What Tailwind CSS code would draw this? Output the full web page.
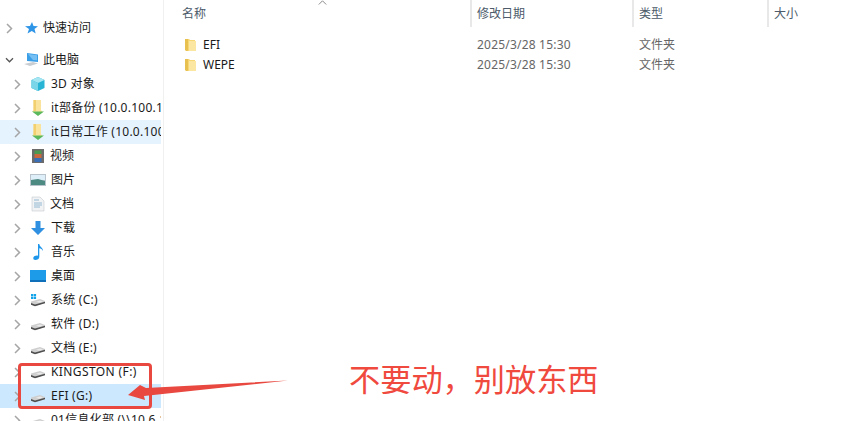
<!DOCTYPE html>
<html lang="zh-CN">
<head>
  <meta charset="UTF-8">
  <title>此电脑</title>
  <script src="https://cdn.jsdelivr.net/npm/@tailwindcss/browser@4"></script>
</head>
<body class="bg-white">
  <svg class="hidden">
    <symbol id="closed" viewBox="0 0 7 11"><path d="M1 1l4.500 4.500L1 10" fill="none" stroke="#a6a6a6" stroke-width="1.500"/></symbol>
    <symbol id="open" viewBox="0 0 10 8"><path d="M1 1.500 5 5.500l4-4" fill="none" stroke="#555" stroke-width="1.500"/></symbol>
    <symbol id="drive" viewBox="0 0 16 16"><path d="M1 9.500 10 7l5 2v2L5 14l-4-1.500z" fill="#cfcfcf"/><path d="M1 11 5 12.500 15 9.800v1.500L5 14.300 1 12.800z" fill="#4f4f4f"/><path d="M6 9.800 10 8.500l3 1-4 1.200z" fill="#eaeaea"/></symbol>
    <symbol id="net" viewBox="0 0 16 18"><path d="M3.500 1H11v10l1.500 2h-10l1-2z" fill="#fae39c"/><path d="M3.500 1H6v11H3.500z" fill="#f2cf6f"/><path d="M2 12.500h12L8 17z" fill="#5cb85c"/></symbol>
    <symbol id="folder" viewBox="0 0 11 14"><path d="M0 1h4l1 1h5v11H1.500L0 12z" fill="#f6d774"/><path d="M0 1h3v11.500L1.500 13 0 12z" fill="#e8c050"/><path d="M4 3h7v10H4z" fill="#fbe6a2"/></symbol>
  </svg>

  <div class="relative h-[421px] w-[857px] overflow-hidden flex font-['Noto_Sans','Noto_Sans_CJK_SC',sans-serif] text-[12px] text-[#1a1a1a]">
    <!-- nav tree -->
    <nav class="w-[164px] shrink-0 border-r border-[#f0f0f0] pt-4">
      <div class="h-6 flex items-center">
        <svg class="ml-[6px] w-[7px] h-[11px]"><use href="#closed"/></svg>
        <svg class="ml-[11px] w-[14px] h-[14px]" viewBox="0 0 14 14"><path d="M8 1l1.500 4 4.500.2-3.500 2.800 1.200 4.500L7.800 10l-4.300 2.500L5 8 1 5.200 6 5z" fill="#2f95e6"/></svg>
        <span class="ml-[5px]">快速访问</span>
      </div>
      <div class="h-6 flex items-center mt-2">
        <svg class="ml-[5px] w-[9px] h-[7px]"><use href="#open"/></svg>
        <svg class="ml-[9px] w-[17px] h-[16px]" viewBox="0 0 17 16"><path d="M4 1l11 1.500V10L4 9z" fill="#3b9fe8"/><path d="M1 12l9-2 5 1.500L7 14z" fill="#c9ced3"/><path d="M5 2l9 1.200v5L10 8z" fill="#76bff2"/></svg>
        <span class="ml-[3px]">此电脑</span>
      </div>
      <div class="h-6 w-[161px] flex items-center">
        <svg class="ml-[14px] w-[7px] h-[11px]"><use href="#closed"/></svg>
        <svg class="ml-[9px] w-[16px] h-[16px]" viewBox="0 0 16 16"><path d="M8 1l6.500 3v8L8 15l-6.500-3V4z" fill="#28b4d4"/><path d="M8 1l6.500 3L8 7 1.500 4z" fill="#a5e6f2"/><path d="M1.500 4 8 7v8l-6.500-3z" fill="#7bd5e8"/></svg>
        <span class="ml-[5px] tracking-[0.25px]">3D 对象</span>
      </div>
      <div class="h-6 w-[161px] flex items-center overflow-hidden whitespace-nowrap">
        <svg class="ml-[14px] shrink-0 w-[7px] h-[11px]"><use href="#closed"/></svg>
        <svg class="ml-[9px] shrink-0 w-[16px] h-[18px]"><use href="#net"/></svg>
        <span class="ml-[5px] tracking-[0.25px]">it部备份 (10.0.100.10)</span>
      </div>
      <div class="h-6 w-[161px] bg-[#e5f3ff] flex items-center overflow-hidden whitespace-nowrap">
        <svg class="ml-[14px] shrink-0 w-[7px] h-[11px]"><use href="#closed"/></svg>
        <svg class="ml-[9px] shrink-0 w-[16px] h-[18px]"><use href="#net"/></svg>
        <span class="ml-[5px] tracking-[0.25px]">it日常工作 (10.0.100.10)</span>
      </div>
      <div class="h-6 w-[161px] flex items-center">
        <svg class="ml-[14px] w-[7px] h-[11px]"><use href="#closed"/></svg>
        <svg class="ml-[10px] w-[14px] h-[16px]" viewBox="0 0 14 16"><path d="M1 1h12v14H1z" fill="#6b6b6b"/><path d="M3.500 2.500h7v3.500h-7z" fill="#4c9a50"/><path d="M3.500 6h7v4h-7z" fill="#c9683c"/><path d="M3.500 10h7v4h-7z" fill="#3a6fb5"/></svg>
        <span class="ml-[5px]">视频</span>
      </div>
      <div class="h-6 w-[161px] flex items-center">
        <svg class="ml-[14px] w-[7px] h-[11px]"><use href="#closed"/></svg>
        <svg class="ml-[9px] w-[16px] h-[12px]" viewBox="0 0 16 12"><path d="M0 0h16v12H0z" fill="#b9c3cc"/><path d="M1 1h14v5H1z" fill="#dfeffa"/><path d="M1 6l7-1 7 2v4H1z" fill="#4c8a82"/></svg>
        <span class="ml-[5px]">图片</span>
      </div>
      <div class="h-6 w-[161px] flex items-center">
        <svg class="ml-[14px] w-[7px] h-[11px]"><use href="#closed"/></svg>
        <svg class="ml-[10px] w-[14px] h-[16px]" viewBox="0 0 14 16"><path d="M1 1h8l4 4v10H1z" fill="#f1f3f4" stroke="#c4c9cc" stroke-width=".6"/><path d="M3 4h5M3 7h8M3 9h8M3 11h6" stroke="#7fa8c9" stroke-width=".8"/></svg>
        <span class="ml-[5px]">文档</span>
      </div>
      <div class="h-6 w-[161px] flex items-center">
        <svg class="ml-[14px] w-[7px] h-[11px]"><use href="#closed"/></svg>
        <svg class="ml-[9px] w-[16px] h-[16px]" viewBox="0 0 16 16"><path d="M5.500 1h5v7H15l-7 7-7-7h4.500z" fill="#2f8fe0"/></svg>
        <span class="ml-[5px]">下载</span>
      </div>
      <div class="h-6 w-[161px] flex items-center">
        <svg class="ml-[14px] w-[7px] h-[11px]"><use href="#closed"/></svg>
        <svg class="ml-[12px] w-[11px] h-[16px]" viewBox="0 0 11 16"><path d="M5 0h1.300c.3 3 4 3.500 3.500 7-.5-1.500-2-2.500-3.500-2.700V13c0 2-2 3-4 3S0 14.500.5 13.300 3 11.300 5 11.700z" fill="#1e96ea"/></svg>
        <span class="ml-[7px]">音乐</span>
      </div>
      <div class="h-6 w-[161px] flex items-center">
        <svg class="ml-[14px] w-[7px] h-[11px]"><use href="#closed"/></svg>
        <svg class="ml-[9px] w-[16px] h-[12px]" viewBox="0 0 16 12"><path d="M0 0h16v10H0z" fill="#1e9be8"/><path d="M0 10h16v2H0z" fill="#0f6fb8"/></svg>
        <span class="ml-[5px]">桌面</span>
      </div>
      <div class="h-6 w-[161px] flex items-center">
        <svg class="ml-[14px] w-[7px] h-[11px]"><use href="#closed"/></svg>
        <svg class="ml-[9px] w-[16px] h-[16px]" viewBox="0 0 16 16"><use href="#drive"/><path d="M1 2h2.300v2.300H1zM3.800 2h2.300v2.300H3.800zM1 4.800h2.300v2.300H1zM3.800 4.800h2.300v2.300H3.800z" fill="#12a3e8"/></svg>
        <span class="ml-[5px] tracking-[0.25px]">系统 (C:)</span>
      </div>
      <div class="h-6 w-[161px] flex items-center">
        <svg class="ml-[14px] w-[7px] h-[11px]"><use href="#closed"/></svg>
        <svg class="ml-[9px] w-[16px] h-[16px]"><use href="#drive"/></svg>
        <span class="ml-[5px] tracking-[0.25px]">软件 (D:)</span>
      </div>
      <div class="h-6 w-[161px] flex items-center">
        <svg class="ml-[14px] w-[7px] h-[11px]"><use href="#closed"/></svg>
        <svg class="ml-[9px] w-[16px] h-[16px]"><use href="#drive"/></svg>
        <span class="ml-[5px] tracking-[0.25px]">文档 (E:)</span>
      </div>
      <div class="h-6 w-[161px] flex items-center">
        <svg class="ml-[14px] w-[7px] h-[11px]"><use href="#closed"/></svg>
        <svg class="ml-[9px] w-[16px] h-[16px]"><use href="#drive"/></svg>
        <span class="ml-[5px] tracking-[0.4px]">KINGSTON (F:)</span>
      </div>
      <div class="h-6 w-[161px] bg-[#cce8ff] flex items-center">
        <svg class="ml-[14px] w-[7px] h-[11px]"><use href="#closed"/></svg>
        <svg class="ml-[9px] w-[16px] h-[16px]"><use href="#drive"/></svg>
        <span class="ml-[5px] tracking-[0.25px]">EFI (G:)</span>
      </div>
      <div class="h-6 w-[161px] flex items-center overflow-hidden whitespace-nowrap">
        <svg class="ml-[14px] shrink-0 w-[7px] h-[11px]"><use href="#closed"/></svg>
        <svg class="ml-[9px] shrink-0 w-[16px] h-[16px]"><use href="#drive"/></svg>
        <span class="ml-[5px] tracking-[0.25px]">01信息化部 (\\10.6.1.10)</span>
      </div>
    </nav>

    <!-- file list -->
    <main class="relative flex-1 min-w-0">
      <div class="grid grid-cols-[306px_162px_135px_90px] h-[27px] text-[#4c5a6a]">
        <div class="pl-[18px] leading-[27px]">名称</div>
        <div class="pl-[5px] leading-[27px] border-l-2 border-[#e8e8e8]">修改日期</div>
        <div class="pl-[5px] leading-[27px] border-l-2 border-[#e8e8e8]">类型</div>
        <div class="pl-[5px] leading-[27px] border-l-2 border-[#e8e8e8]">大小</div>
      </div>
      <svg class="absolute left-[154px] top-0 w-[9px] h-[5px]" viewBox="0 0 9 5"><path d="M.8 4.500 4.500.8l3.700 3.700" fill="none" stroke="#8a8a8a"/></svg>
      <div class="mt-[7px]">
        <div class="grid grid-cols-[306px_162px_135px_90px] h-[21px] items-center text-[#666]">
          <div class="flex items-center pl-[21px] text-[#1a1a1a]"><svg class="w-[11px] h-[14px]"><use href="#folder"/></svg><span class="ml-[7px]">EFI</span></div>
          <div class="pl-[7px] tracking-[0.2px]">2025/3/28 15:30</div>
          <div class="pl-[7px]">文件夹</div>
          <div></div>
        </div>
        <div class="grid grid-cols-[306px_162px_135px_90px] h-[20px] items-center text-[#666]">
          <div class="flex items-center pl-[21px] text-[#1a1a1a]"><svg class="w-[11px] h-[14px]"><use href="#folder"/></svg><span class="ml-[7px]">WEPE</span></div>
          <div class="pl-[7px] tracking-[0.2px]">2025/3/28 15:30</div>
          <div class="pl-[7px]">文件夹</div>
          <div></div>
        </div>
      </div>
    </main>

    <!-- red annotation over the screenshot -->
    <div class="absolute left-[18px] top-[363px] w-[134px] h-[46px] border-[3px] border-[#e8483f] rounded-[4px]"></div>
    <svg class="absolute left-0 top-0 w-[857px] h-[421px] pointer-events-none" viewBox="0 0 857 421"><path d="M288 380.500 146 388l-6-3-12 10 17 5-1-4z" fill="#e8483f"/></svg>
    <div class="absolute left-[349px] top-[357px] text-[31.2px] leading-[44px] font-normal text-[#f0493e] whitespace-nowrap">不要动，别放东西</div>
  </div>
</body>
</html>
